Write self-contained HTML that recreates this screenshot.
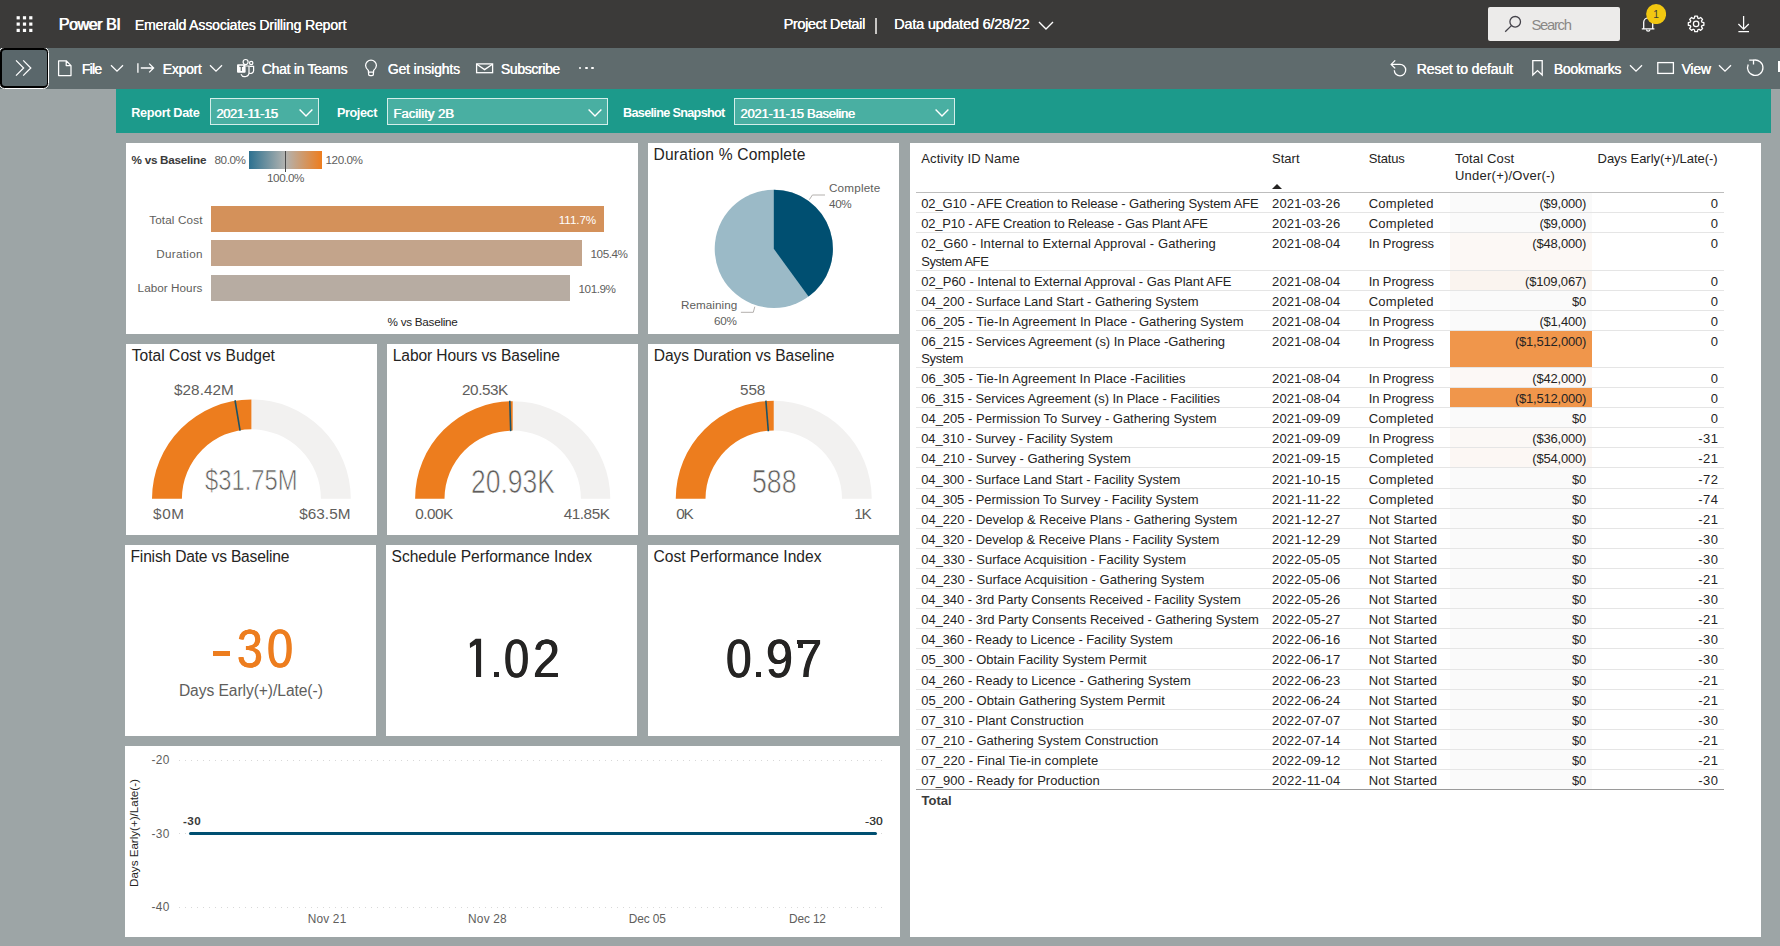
<!DOCTYPE html>
<html><head><meta charset="utf-8"><title>Power BI</title>
<style>
html,body{margin:0;padding:0;}
body{width:1780px;height:946px;background:#9da5a6;position:relative;overflow:hidden;font-family:"Liberation Sans",sans-serif;}
.t{position:absolute;white-space:nowrap;font-family:"Liberation Sans",sans-serif;}
</style></head><body>
<div style="position:absolute;left:0px;top:0px;width:1780px;height:48px;background:#3b3a39;"></div>
<div style="position:absolute;left:0px;top:48px;width:1780px;height:41px;background:#5f6b6d;"></div>
<div style="position:absolute;left:116px;top:89px;width:1655px;height:44px;background:#1c9a8b;"></div>
<svg style="position:absolute;left:0px;top:0px;" width="48" height="48" viewBox="0 0 48 48"><rect x="16.6" y="16.2" width="3.2" height="3.2" fill="#fff"/><rect x="16.6" y="22.5" width="3.2" height="3.2" fill="#fff"/><rect x="16.6" y="28.8" width="3.2" height="3.2" fill="#fff"/><rect x="22.9" y="16.2" width="3.2" height="3.2" fill="#fff"/><rect x="22.9" y="22.5" width="3.2" height="3.2" fill="#fff"/><rect x="22.9" y="28.8" width="3.2" height="3.2" fill="#fff"/><rect x="29.2" y="16.2" width="3.2" height="3.2" fill="#fff"/><rect x="29.2" y="22.5" width="3.2" height="3.2" fill="#fff"/><rect x="29.2" y="28.8" width="3.2" height="3.2" fill="#fff"/></svg>
<div class="t" style="left:58.50px;top:15.26px;font-size:16.00px;line-height:19.20px;letter-spacing:-0.417px;color:#ffffff;text-shadow:0.8px 0 0 #fff;">Power BI</div>
<div class="t" style="left:134.80px;top:16.95px;font-size:14.00px;line-height:16.80px;letter-spacing:-0.122px;color:#ffffff;text-shadow:0.3px 0 0 #fff;">Emerald Associates Drilling Report</div>
<div class="t" style="left:783.40px;top:16.18px;font-size:14.60px;line-height:17.52px;letter-spacing:-0.387px;color:#ffffff;text-shadow:0.3px 0 0 #fff;">Project Detail</div>
<div style="position:absolute;left:875px;top:18px;width:1.5px;height:16px;background:#c8c6c4;"></div>
<div class="t" style="left:894.00px;top:16.18px;font-size:14.60px;line-height:17.52px;letter-spacing:-0.250px;color:#ffffff;text-shadow:0.3px 0 0 #fff;">Data updated 6/28/22</div>
<svg style="position:absolute;left:1037px;top:19px;" width="18" height="12" viewBox="0 0 18 12"><path d="M2 3 L9 10 L16 3" fill="none" stroke="#fff" stroke-width="1.4"/></svg>
<div style="position:absolute;left:1488px;top:7px;width:132px;height:34px;background:#ecebea;border-radius:2px;"></div>
<svg style="position:absolute;left:1503px;top:14px;" width="20" height="20" viewBox="0 0 20 20"><circle cx="12.2" cy="7.8" r="5.3" fill="none" stroke="#44424a" stroke-width="1.3"/><path d="M8.4 11.6 L2.2 17.8" stroke="#44424a" stroke-width="1.3" fill="none"/></svg>
<div class="t" style="left:1531.40px;top:16.59px;font-size:14.80px;line-height:17.76px;letter-spacing:-1.259px;color:#8a8886;">Search</div>
<svg style="position:absolute;left:1636px;top:10px;" width="24" height="24" viewBox="0 0 24 24"><path d="M5.8 18.9 L18.4 18.9 M7.7 18.9 L7.7 12.3 A4.5 4.5 0 0 1 16.7 12.3 L16.7 18.9" fill="none" stroke="#fff" stroke-width="1.3"/><path d="M10.5 19.4 A1.7 1.7 0 0 0 13.9 19.4" fill="none" stroke="#fff" stroke-width="1.2"/></svg>
<svg style="position:absolute;left:1646px;top:4px;" width="20.4" height="20.2" viewBox="0 0 20.4 20.2"><circle cx="10.1" cy="10.1" r="10" fill="#f2c811"/></svg>
<div class="t" style="left:1653.37px;top:8.91px;font-size:10.24px;line-height:12.28px;letter-spacing:0.000px;color:#3b3a39;">1</div>
<svg style="position:absolute;left:1684px;top:12px;" width="24" height="24" viewBox="0 0 24 24"><path d="M19.88 10.54 L19.88 13.26 L17.96 13.60 L17.45 14.84 L18.56 16.44 L16.64 18.36 L15.04 17.25 L13.80 17.76 L13.46 19.68 L10.74 19.68 L10.40 17.76 L9.16 17.25 L7.56 18.36 L5.64 16.44 L6.75 14.84 L6.24 13.60 L4.32 13.26 L4.32 10.54 L6.24 10.20 L6.75 8.96 L5.64 7.36 L7.56 5.44 L9.16 6.55 L10.40 6.04 L10.74 4.12 L13.46 4.12 L13.80 6.04 L15.04 6.55 L16.64 5.44 L18.56 7.36 L17.45 8.96 L17.96 10.20 Z" fill="none" stroke="#fff" stroke-width="1.3" stroke-linejoin="round"/><circle cx="12.1" cy="11.9" r="2.7" fill="none" stroke="#fff" stroke-width="1.25"/></svg>
<svg style="position:absolute;left:1734px;top:12px;" width="20" height="24" viewBox="0 0 20 24"><path d="M9.6 4 L9.6 17 M4.4 12 L9.6 17.2 L14.8 12 M4.4 19.6 L15 19.6" fill="none" stroke="#fff" stroke-width="1.25"/></svg>
<div style="position:absolute;left:0;top:48px;width:50px;height:41px;overflow:hidden;"><div style="position:absolute;left:-1px;top:-1px;width:50px;height:42px;box-sizing:border-box;border:1px solid #fff;border-radius:5.5px;background:#000;"></div></div>
<div style="position:absolute;left:1.9px;top:50px;width:45px;height:36.3px;border-radius:3px;background:#5a676b;"></div>
<svg style="position:absolute;left:12px;top:56px;" width="24" height="24" viewBox="0 0 24 24"><path d="M4 4.4 L11.6 12 L4 19.6 M11.2 4.4 L18.8 12 L11.2 19.6" fill="none" stroke="#fff" stroke-width="1.25"/></svg>
<svg style="position:absolute;left:56px;top:58px;" width="18" height="20" viewBox="0 0 18 20"><path d="M2.6 2.8 L10.2 2.8 L15 7.6 L15 17.6 L2.6 17.6 Z M10.2 2.8 L10.2 7.6 L15 7.6" fill="none" stroke="#fff" stroke-width="1.25" stroke-linejoin="round"/></svg>
<div class="t" style="left:81.70px;top:60.55px;font-size:14.00px;line-height:16.80px;letter-spacing:-0.753px;color:#ffffff;text-shadow:0.3px 0 0 #fff;">File</div>
<svg style="position:absolute;left:109.6px;top:64.4px;" width="14" height="9" viewBox="0 0 14 9"><path d="M1 1.2 L7 7.2 L13 1.2" fill="none" stroke="#fff" stroke-width="1.3"/></svg>
<svg style="position:absolute;left:136px;top:60px;" width="20" height="16" viewBox="0 0 20 16"><path d="M1.9 3.2 L1.9 12.8 M4.8 8 L17.6 8 M13.2 3.6 L17.6 8 L13.2 12.4" fill="none" stroke="#fff" stroke-width="1.3"/></svg>
<div class="t" style="left:162.60px;top:60.55px;font-size:14.00px;line-height:16.80px;letter-spacing:-0.273px;color:#ffffff;text-shadow:0.3px 0 0 #fff;">Export</div>
<svg style="position:absolute;left:208.8px;top:64.4px;" width="14" height="9" viewBox="0 0 14 9"><path d="M1 1.2 L7 7.2 L13 1.2" fill="none" stroke="#fff" stroke-width="1.3"/></svg>
<svg style="position:absolute;left:235px;top:58px;" width="21" height="21" viewBox="0 0 21 21"><rect x="2" y="6.2" width="8.6" height="8.6" rx="1" fill="#fff"/><path d="M4.4 8.4 L8.2 8.4 M6.3 8.4 L6.3 13" stroke="#5f6b6d" stroke-width="1.2"/><circle cx="10.6" cy="4" r="2.5" fill="none" stroke="#fff" stroke-width="1.2"/><circle cx="16.2" cy="5" r="1.7" fill="none" stroke="#fff" stroke-width="1.2"/><path d="M10.6 8 L14 8 L14 14 A4.2 4.2 0 0 1 6 16.2" fill="none" stroke="#fff" stroke-width="1.2"/><path d="M14.4 8.4 L18.6 8.4 L18.6 12.6 A3 3 0 0 1 14 15" fill="none" stroke="#fff" stroke-width="1.2"/></svg>
<div class="t" style="left:261.70px;top:60.55px;font-size:14.00px;line-height:16.80px;letter-spacing:-0.294px;color:#ffffff;text-shadow:0.3px 0 0 #fff;">Chat in Teams</div>
<svg style="position:absolute;left:362px;top:58px;" width="18" height="20" viewBox="0 0 18 20"><path d="M6.4 14.2 L6.4 12.4 C4.6 11 3.6 9.6 3.6 7.6 A5.4 5.4 0 0 1 14.4 7.6 C14.4 9.6 13.4 11 11.6 12.4 L11.6 14.2 Z M6.6 14.4 L6.6 16.2 Q6.6 17.6 8 17.6 L10 17.6 Q11.4 17.6 11.4 16.2 L11.4 14.4" fill="none" stroke="#fff" stroke-width="1.25" stroke-linejoin="round"/></svg>
<div class="t" style="left:387.70px;top:60.55px;font-size:14.00px;line-height:16.80px;letter-spacing:-0.148px;color:#ffffff;text-shadow:0.3px 0 0 #fff;">Get insights</div>
<svg style="position:absolute;left:475px;top:61px;" width="20" height="14" viewBox="0 0 20 14"><rect x="1.6" y="2.9" width="16" height="8.8" fill="none" stroke="#fff" stroke-width="1.3"/><path d="M1.8 3.3 L9.6 8.6 L17.4 3.3" fill="none" stroke="#fff" stroke-width="1.3"/></svg>
<div class="t" style="left:500.80px;top:60.55px;font-size:14.00px;line-height:16.80px;letter-spacing:-0.370px;color:#ffffff;text-shadow:0.3px 0 0 #fff;">Subscribe</div>
<div style="position:absolute;left:578.8px;top:66.8px;width:2.6px;height:2.6px;background:#fff;border-radius:1.2px;"></div>
<div style="position:absolute;left:585.0999999999999px;top:66.8px;width:2.6px;height:2.6px;background:#fff;border-radius:1.2px;"></div>
<div style="position:absolute;left:591.4px;top:66.8px;width:2.6px;height:2.6px;background:#fff;border-radius:1.2px;"></div>
<svg style="position:absolute;left:1388.3px;top:58px;" width="20" height="20" viewBox="0 0 20 20"><path d="M3.6 6.4 L12 6.4 A5.7 5.7 0 1 1 6.3 12.2" fill="none" stroke="#fff" stroke-width="1.3"/><path d="M7.2 2.4 L3.2 6.4 L7.2 10.4" fill="none" stroke="#fff" stroke-width="1.3"/></svg>
<div class="t" style="left:1416.60px;top:60.55px;font-size:14.00px;line-height:16.80px;letter-spacing:-0.124px;color:#ffffff;text-shadow:0.3px 0 0 #fff;">Reset to default</div>
<svg style="position:absolute;left:1530px;top:58px;" width="16" height="20" viewBox="0 0 16 20"><path d="M2.8 2.6 L12.2 2.6 L12.2 17 L7.5 12.6 L2.8 17 Z" fill="none" stroke="#fff" stroke-width="1.3" stroke-linejoin="miter"/></svg>
<div class="t" style="left:1553.80px;top:60.55px;font-size:14.00px;line-height:16.80px;letter-spacing:-0.315px;color:#ffffff;text-shadow:0.3px 0 0 #fff;">Bookmarks</div>
<svg style="position:absolute;left:1629.2px;top:64.4px;" width="14" height="9" viewBox="0 0 14 9"><path d="M1 1.2 L7 7.2 L13 1.2" fill="none" stroke="#fff" stroke-width="1.3"/></svg>
<svg style="position:absolute;left:1655px;top:60px;" width="22" height="16" viewBox="0 0 22 16"><rect x="2.8" y="2.6" width="15.6" height="10.8" fill="none" stroke="#fff" stroke-width="1.3"/></svg>
<div class="t" style="left:1681.50px;top:60.55px;font-size:14.00px;line-height:16.80px;letter-spacing:-0.264px;color:#ffffff;text-shadow:0.3px 0 0 #fff;">View</div>
<svg style="position:absolute;left:1718.2px;top:64.4px;" width="14" height="9" viewBox="0 0 14 9"><path d="M1 1.2 L7 7.2 L13 1.2" fill="none" stroke="#fff" stroke-width="1.3"/></svg>
<svg style="position:absolute;left:1744px;top:56px;" width="24" height="24" viewBox="0 0 24 24"><path d="M9.6 4.2 A7.7 7.7 0 1 1 4.2 8.6" fill="none" stroke="#fff" stroke-width="1.3"/><path d="M5.2 4.2 L9.5 4.2 L9.5 8.6" fill="none" stroke="#fff" stroke-width="1.3"/></svg>
<div style="position:absolute;left:1778.3px;top:61.2px;width:2px;height:10.6px;background:#fff;"></div>
<div class="t" style="left:131.30px;top:106.40px;font-size:12.67px;line-height:15.21px;letter-spacing:-0.324px;color:#ffffff;font-weight:bold;">Report Date</div>
<div style="position:absolute;left:210px;top:98px;width:109px;height:27px;box-sizing:border-box;border:1px solid #d4eeea;background:#49afa2;"></div>
<div class="t" style="left:216.20px;top:105.63px;font-size:13.06px;line-height:15.68px;letter-spacing:-0.463px;color:#ffffff;text-shadow:0.6px 0 0 #fff;">2021-11-15</div>
<svg style="position:absolute;left:297.8px;top:106.6px;" width="16" height="12" viewBox="0 0 16 12"><path d="M1.6 2.6 L8 9 L14.4 2.6" fill="none" stroke="#fff" stroke-width="1.4"/></svg>
<div class="t" style="left:337.00px;top:106.40px;font-size:12.67px;line-height:15.21px;letter-spacing:-0.412px;color:#ffffff;font-weight:bold;">Project</div>
<div style="position:absolute;left:387px;top:98px;width:221px;height:27px;box-sizing:border-box;border:1px solid #d4eeea;background:#49afa2;"></div>
<div class="t" style="left:393.20px;top:105.63px;font-size:13.06px;line-height:15.68px;letter-spacing:0.044px;color:#ffffff;text-shadow:0.6px 0 0 #fff;">Facility 2B</div>
<svg style="position:absolute;left:586.8px;top:106.6px;" width="16" height="12" viewBox="0 0 16 12"><path d="M1.6 2.6 L8 9 L14.4 2.6" fill="none" stroke="#fff" stroke-width="1.4"/></svg>
<div class="t" style="left:623.00px;top:106.40px;font-size:12.67px;line-height:15.21px;letter-spacing:-0.681px;color:#ffffff;font-weight:bold;">Baseline Snapshot</div>
<div style="position:absolute;left:734px;top:98px;width:221px;height:27px;box-sizing:border-box;border:1px solid #d4eeea;background:#49afa2;"></div>
<div class="t" style="left:740.20px;top:105.63px;font-size:13.06px;line-height:15.68px;letter-spacing:-0.256px;color:#ffffff;text-shadow:0.6px 0 0 #fff;">2021-11-15 Baseline</div>
<svg style="position:absolute;left:933.8px;top:106.6px;" width="16" height="12" viewBox="0 0 16 12"><path d="M1.6 2.6 L8 9 L14.4 2.6" fill="none" stroke="#fff" stroke-width="1.4"/></svg>
<div style="position:absolute;left:126px;top:143px;width:512px;height:191px;background:#ffffff;"></div>
<div style="position:absolute;left:648px;top:143px;width:251px;height:191px;background:#ffffff;"></div>
<div style="position:absolute;left:126px;top:344px;width:251px;height:191px;background:#ffffff;"></div>
<div style="position:absolute;left:387px;top:344px;width:251px;height:191px;background:#ffffff;"></div>
<div style="position:absolute;left:648px;top:344px;width:251px;height:191px;background:#ffffff;"></div>
<div style="position:absolute;left:125px;top:545px;width:251px;height:191px;background:#ffffff;"></div>
<div style="position:absolute;left:386px;top:545px;width:251px;height:191px;background:#ffffff;"></div>
<div style="position:absolute;left:648px;top:545px;width:251px;height:191px;background:#ffffff;"></div>
<div style="position:absolute;left:125px;top:746px;width:775px;height:191px;background:#ffffff;"></div>
<div style="position:absolute;left:910px;top:143px;width:851px;height:794px;background:#ffffff;"></div>
<div class="t" style="left:131.50px;top:153.13px;font-size:11.70px;line-height:14.04px;letter-spacing:-0.254px;color:#3a3a3a;font-weight:bold;">% vs Baseline</div>
<div class="t" style="left:214.50px;top:153.13px;font-size:11.70px;line-height:14.04px;letter-spacing:-0.419px;color:#605e5c;">80.0%</div>
<div style="position:absolute;left:249px;top:151px;width:73px;height:18px;background:linear-gradient(90deg,#2d7190 0%,#b3b3b0 50%,#ee7d1e 100%);"></div>
<div style="position:absolute;left:285px;top:151px;width:1px;height:21px;background:#4a4a4a;"></div>
<div class="t" style="left:325.50px;top:153.13px;font-size:11.70px;line-height:14.04px;letter-spacing:-0.436px;color:#605e5c;">120.0%</div>
<div class="t" style="left:267.00px;top:171.13px;font-size:11.70px;line-height:14.04px;letter-spacing:-0.436px;color:#605e5c;">100.0%</div>
<div style="position:absolute;left:211px;top:206px;width:393px;height:26px;background:#d4915a;"></div>
<div class="t" style="left:149.20px;top:212.53px;font-size:11.70px;line-height:14.04px;letter-spacing:0.142px;color:#605e5c;">Total Cost</div>
<div class="t" style="left:558.80px;top:213.13px;font-size:11.70px;line-height:14.04px;letter-spacing:-0.089px;color:#ffffff;">111.7%</div>
<div style="position:absolute;left:211px;top:240px;width:371px;height:26px;background:#c3a48b;"></div>
<div class="t" style="left:156.24px;top:246.53px;font-size:11.70px;line-height:14.04px;letter-spacing:0.291px;color:#605e5c;">Duration</div>
<div class="t" style="left:590.50px;top:247.13px;font-size:11.70px;line-height:14.04px;letter-spacing:-0.436px;color:#605e5c;">105.4%</div>
<div style="position:absolute;left:211px;top:274.5px;width:359px;height:26px;background:#b7aca2;"></div>
<div class="t" style="left:137.60px;top:281.03px;font-size:11.70px;line-height:14.04px;letter-spacing:0.052px;color:#605e5c;">Labor Hours</div>
<div class="t" style="left:578.50px;top:281.63px;font-size:11.70px;line-height:14.04px;letter-spacing:-0.436px;color:#605e5c;">101.9%</div>
<div class="t" style="left:387.50px;top:314.93px;font-size:11.70px;line-height:14.04px;letter-spacing:-0.253px;color:#252423;">% vs Baseline</div>
<svg style="position:absolute;left:648px;top:143px;" width="251" height="191" viewBox="0 0 251 191"><circle cx="125.79999999999995" cy="105.80000000000001" r="59.1" fill="#9bbac7"/><path d="M125.79999999999995 105.80000000000001 L125.79999999999995 46.70000000000001 A59.1 59.1 0 0 1 160.54 153.61 Z" fill="#004f71"/><path d="M161.4 56.6 L164.4 52 L177 52" fill="none" stroke="#b3b0ad" stroke-width="1"/><path d="M92.9 169.3 L105.3 169.3 L106.8 163.7" fill="none" stroke="#b3b0ad" stroke-width="1"/></svg>
<div class="t" style="left:653.50px;top:145.63px;font-size:15.60px;line-height:18.72px;letter-spacing:0.207px;color:#252423;">Duration % Complete</div>
<div class="t" style="left:829.00px;top:181.23px;font-size:11.70px;line-height:14.04px;letter-spacing:0.183px;color:#605e5c;">Complete</div>
<div class="t" style="left:829.00px;top:196.93px;font-size:11.70px;line-height:14.04px;letter-spacing:-0.333px;color:#605e5c;">40%</div>
<div class="t" style="left:681.00px;top:298.33px;font-size:11.70px;line-height:14.04px;letter-spacing:0.047px;color:#605e5c;">Remaining</div>
<div class="t" style="left:714.12px;top:314.13px;font-size:11.70px;line-height:14.04px;letter-spacing:-0.333px;color:#605e5c;">60%</div>
<svg style="position:absolute;left:126px;top:344px;" width="251" height="191" viewBox="0 0 251 191"><path d="M125.40 55.40 A99.4 99.4 0 0 1 224.80 154.80 L194.90 154.80 A69.5 69.5 0 0 0 125.40 85.30 Z" fill="#f2f1f0"/><path d="M26.00 154.80 A99.4 99.4 0 0 1 125.40 55.40 L125.40 85.30 A69.5 69.5 0 0 0 55.90 154.80 Z" fill="#ed7d1e"/><path d="M114.08 86.73 L109.02 56.25" stroke="#1b5368" stroke-width="1.6"/></svg>
<div class="t" style="left:131.80px;top:347.23px;font-size:15.60px;line-height:18.72px;letter-spacing:0.007px;color:#252423;">Total Cost vs Budget</div>
<div class="t" style="left:174.00px;top:381.41px;font-size:15.31px;line-height:18.37px;letter-spacing:0.041px;color:#605e5c;">$28.42M</div>
<div class="t" style="left:153.00px;top:505.11px;font-size:15.31px;line-height:18.37px;letter-spacing:0.623px;color:#605e5c;">$0M</div>
<div class="t" style="left:299.15px;top:505.11px;font-size:15.31px;line-height:18.37px;letter-spacing:0.059px;color:#605e5c;">$63.5M</div>
<div class="t" style="left:205.15px;top:461.65px;font-size:30.16px;line-height:36.19px;letter-spacing:0.000px;color:#605e5c;-webkit-text-stroke:0.7px #fff;transform:scaleX(0.7881);transform-origin:0 0;">$31.75M</div>
<svg style="position:absolute;left:387px;top:344px;" width="251" height="191" viewBox="0 0 251 191"><path d="M125.70 57.20 A97.6 97.6 0 0 1 223.30 154.80 L193.90 154.80 A68.2 68.2 0 0 0 125.70 86.60 Z" fill="#f2f1f0"/><path d="M28.10 154.80 A97.6 97.6 0 0 1 125.70 57.20 L125.70 86.60 A68.2 68.2 0 0 0 57.50 154.80 Z" fill="#ed7d1e"/><path d="M123.69 87.13 L122.79 56.74" stroke="#1b5368" stroke-width="1.6"/></svg>
<div class="t" style="left:392.80px;top:347.23px;font-size:15.60px;line-height:18.72px;letter-spacing:-0.125px;color:#252423;">Labor Hours vs Baseline</div>
<div class="t" style="left:462.00px;top:381.41px;font-size:15.31px;line-height:18.37px;letter-spacing:-0.431px;color:#605e5c;">20.53K</div>
<div class="t" style="left:415.30px;top:505.11px;font-size:15.31px;line-height:18.37px;letter-spacing:-0.526px;color:#605e5c;">0.00K</div>
<div class="t" style="left:563.64px;top:505.11px;font-size:15.31px;line-height:18.37px;letter-spacing:-0.431px;color:#605e5c;">41.85K</div>
<div class="t" style="left:470.70px;top:461.59px;font-size:32.66px;line-height:39.19px;letter-spacing:0.000px;color:#605e5c;-webkit-text-stroke:0.7px #fff;transform:scaleX(0.8116);transform-origin:0 0;">20.93K</div>
<svg style="position:absolute;left:648px;top:344px;" width="251" height="191" viewBox="0 0 251 191"><path d="M125.75 56.80 A98 98 0 0 1 223.75 154.80 L194.00 154.80 A68.25 68.25 0 0 0 125.75 86.55 Z" fill="#f2f1f0"/><path d="M27.75 154.80 A98 98 0 0 1 125.75 56.80 L125.75 86.55 A68.25 68.25 0 0 0 57.50 154.80 Z" fill="#ed7d1e"/><path d="M120.33 87.27 L117.86 56.62" stroke="#1b5368" stroke-width="1.6"/></svg>
<div class="t" style="left:653.80px;top:347.23px;font-size:15.60px;line-height:18.72px;letter-spacing:-0.094px;color:#252423;">Days Duration vs Baseline</div>
<div class="t" style="left:740.00px;top:381.41px;font-size:15.31px;line-height:18.37px;letter-spacing:-0.075px;color:#605e5c;">558</div>
<div class="t" style="left:676.20px;top:505.11px;font-size:15.31px;line-height:18.37px;letter-spacing:-1.154px;color:#605e5c;">0K</div>
<div class="t" style="left:854.23px;top:505.11px;font-size:15.31px;line-height:18.37px;letter-spacing:-1.154px;color:#605e5c;">1K</div>
<div class="t" style="left:751.50px;top:461.59px;font-size:32.66px;line-height:39.19px;letter-spacing:0.000px;color:#605e5c;-webkit-text-stroke:0.7px #fff;transform:scaleX(0.8167);transform-origin:0 0;">588</div>
<div class="t" style="left:130.50px;top:548.23px;font-size:15.60px;line-height:18.72px;letter-spacing:-0.182px;color:#252423;">Finish Date vs Baseline</div>
<div class="t" style="left:391.50px;top:548.23px;font-size:15.60px;line-height:18.72px;letter-spacing:-0.020px;color:#252423;">Schedule Performance Index</div>
<div class="t" style="left:653.50px;top:548.23px;font-size:15.60px;line-height:18.72px;letter-spacing:-0.010px;color:#252423;">Cost Performance Index</div>
<div style="position:absolute;left:212.7px;top:650.7px;width:16.9px;height:5.3px;background:#ed7d1e;"></div>
<div class="t" style="left:237.06px;top:615.81px;font-size:54.40px;line-height:65.28px;color:#ed7d1e;transform:scaleX(0.8514);transform-origin:0 0;text-shadow:0.6px 0 0 #ed7d1e,-0.6px 0 0 #ed7d1e;">3</div>
<div class="t" style="left:266.82px;top:615.81px;font-size:54.40px;line-height:65.28px;color:#ed7d1e;transform:scaleX(0.8623);transform-origin:0 0;text-shadow:0.6px 0 0 #ed7d1e,-0.6px 0 0 #ed7d1e;">0</div>
<div class="t" style="left:178.91px;top:682.43px;font-size:15.60px;line-height:18.72px;letter-spacing:-0.061px;color:#605e5c;">Days Early(+)/Late(-)</div>
<svg style="position:absolute;left:465px;top:635px;" width="20" height="45" viewBox="0 0 20 45"><path d="M4.8 8.3 L10.7 3.7 L16.1 3.7 L16.1 41.9 L11 41.9 L11 9.4 L5 12.9 Z" fill="#252423"/></svg>
<div style="position:absolute;left:494.2px;top:672.1px;width:5.1px;height:4.9px;background:#252423;"></div>
<div class="t" style="left:504.09px;top:625.61px;font-size:54.40px;line-height:65.28px;color:#252423;transform:scaleX(0.8315);transform-origin:0 0;text-shadow:0.6px 0 0 #252423,-0.6px 0 0 #252423;">0</div>
<div class="t" style="left:532.68px;top:625.61px;font-size:54.40px;line-height:65.28px;color:#252423;transform:scaleX(0.8888);transform-origin:0 0;text-shadow:0.6px 0 0 #252423,-0.6px 0 0 #252423;">2</div>
<div class="t" style="left:726.26px;top:625.61px;font-size:54.40px;line-height:65.28px;color:#252423;transform:scaleX(0.8469);transform-origin:0 0;text-shadow:0.6px 0 0 #252423,-0.6px 0 0 #252423;">0</div>
<div style="position:absolute;left:756.2px;top:672.1px;width:5.1px;height:4.9px;background:#252423;"></div>
<div class="t" style="left:765.60px;top:625.61px;font-size:54.40px;line-height:65.28px;color:#252423;transform:scaleX(0.8903);transform-origin:0 0;text-shadow:0.6px 0 0 #252423,-0.6px 0 0 #252423;">9</div>
<div class="t" style="left:795.25px;top:625.61px;font-size:54.40px;line-height:65.28px;color:#252423;transform:scaleX(0.8937);transform-origin:0 0;text-shadow:0.6px 0 0 #252423,-0.6px 0 0 #252423;">7</div>
<div style="position:absolute;left:797.8px;top:640.5px;width:5.0px;height:7.2px;background:#252423;"></div>
<div style="position:absolute;left:179px;top:760px;width:708px;height:1px;background:repeating-linear-gradient(90deg,#d8d8d8 0,#d8d8d8 1px,transparent 1px,transparent 6px);"></div>
<div style="position:absolute;left:179px;top:833px;width:708px;height:1px;background:repeating-linear-gradient(90deg,#d8d8d8 0,#d8d8d8 1px,transparent 1px,transparent 6px);"></div>
<div style="position:absolute;left:179px;top:907px;width:708px;height:1px;background:repeating-linear-gradient(90deg,#d8d8d8 0,#d8d8d8 1px,transparent 1px,transparent 6px);"></div>
<div style="position:absolute;left:188.5px;top:831.7px;width:688.5px;height:3.2px;background:#004f71;border-radius:1.6px;"></div>
<div class="t" style="left:151.47px;top:752.54px;font-size:11.89px;line-height:14.27px;letter-spacing:0.420px;color:#605e5c;">-20</div>
<div class="t" style="left:151.47px;top:826.64px;font-size:11.89px;line-height:14.27px;letter-spacing:0.420px;color:#605e5c;">-30</div>
<div class="t" style="left:151.47px;top:900.14px;font-size:11.89px;line-height:14.27px;letter-spacing:0.420px;color:#605e5c;">-40</div>
<div class="t" style="left:183.00px;top:814.13px;font-size:11.70px;line-height:14.04px;letter-spacing:0.444px;color:#3a3a3a;font-weight:bold;">-30</div>
<div class="t" style="left:864.90px;top:814.13px;font-size:11.70px;line-height:14.04px;letter-spacing:0.344px;color:#3a3a3a;text-shadow:0.4px 0 0 #3a3a3a;">-30</div>
<div class="t" style="left:307.69px;top:911.94px;font-size:11.89px;line-height:14.27px;letter-spacing:0.185px;color:#605e5c;">Nov 21</div>
<div class="t" style="left:468.09px;top:911.94px;font-size:11.89px;line-height:14.27px;letter-spacing:0.185px;color:#605e5c;">Nov 28</div>
<div class="t" style="left:628.77px;top:911.94px;font-size:11.89px;line-height:14.27px;letter-spacing:-0.125px;color:#605e5c;">Dec 05</div>
<div class="t" style="left:788.97px;top:911.94px;font-size:11.89px;line-height:14.27px;letter-spacing:-0.125px;color:#605e5c;">Dec 12</div>
<div style="position:absolute;left:135px;top:833.3px;width:0;height:0;"><div style="transform:rotate(-90deg);transform-origin:0 0;position:absolute;left:0;top:0;"><div class="t" style="left:-53.99px;top:-8.5px;font-size:11.7px;line-height:14px;letter-spacing:-0.046px;color:#252423;">Days Early(+)/Late(-)</div></div></div>
<div class="t" style="left:921.20px;top:151.10px;font-size:13.00px;line-height:15.60px;letter-spacing:0.159px;color:#252423;">Activity ID Name</div>
<div class="t" style="left:1272.00px;top:151.10px;font-size:13.00px;line-height:15.60px;letter-spacing:0.021px;color:#252423;">Start</div>
<div class="t" style="left:1368.70px;top:151.10px;font-size:13.00px;line-height:15.60px;letter-spacing:-0.154px;color:#252423;">Status</div>
<div class="t" style="left:1455.00px;top:151.10px;font-size:13.00px;line-height:15.60px;letter-spacing:0.158px;color:#252423;">Total Cost</div>
<div class="t" style="left:1455.00px;top:168.10px;font-size:13.00px;line-height:15.60px;letter-spacing:0.233px;color:#252423;">Under(+)/Over(-)</div>
<div class="t" style="left:1597.60px;top:151.10px;font-size:13.00px;line-height:15.60px;letter-spacing:-0.051px;color:#252423;">Days Early(+)/Late(-)</div>
<svg style="position:absolute;left:1271px;top:183px;" width="12" height="7" viewBox="0 0 12 7"><path d="M1 6 L6 1 L11 6 Z" fill="#252423"/></svg>
<div style="position:absolute;left:916px;top:192px;width:808px;height:1px;background:#bdbdbd;"></div>
<div style="position:absolute;left:1449.5px;top:193px;width:142.5px;height:19px;background:#fafafa;"></div>
<div class="t" style="left:921.20px;top:195.70px;font-size:13.00px;line-height:15.60px;letter-spacing:-0.131px;color:#252423;">02_G10 - AFE Creation to Release - Gathering System AFE</div>
<div class="t" style="left:1272.00px;top:195.70px;font-size:13.00px;line-height:15.60px;letter-spacing:0.185px;color:#252423;">2021-03-26</div>
<div class="t" style="left:1368.70px;top:195.70px;font-size:13.00px;line-height:15.60px;letter-spacing:0.254px;color:#252423;">Completed</div>
<div class="t" style="left:1539.44px;top:195.70px;font-size:13.00px;line-height:15.60px;letter-spacing:-0.221px;color:#252423;">($9,000)</div>
<div class="t" style="left:1710.81px;top:195.70px;font-size:13.00px;line-height:15.60px;letter-spacing:0.000px;color:#252423;">0</div>
<div style="position:absolute;left:916px;top:212px;width:808px;height:1px;background:#e5e5e5;"></div>
<div style="position:absolute;left:1449.5px;top:213px;width:142.5px;height:19px;background:#fafafa;"></div>
<div class="t" style="left:921.20px;top:215.70px;font-size:13.00px;line-height:15.60px;letter-spacing:-0.203px;color:#252423;">02_P10 - AFE Creation to Release - Gas Plant AFE</div>
<div class="t" style="left:1272.00px;top:215.70px;font-size:13.00px;line-height:15.60px;letter-spacing:0.185px;color:#252423;">2021-03-26</div>
<div class="t" style="left:1368.70px;top:215.70px;font-size:13.00px;line-height:15.60px;letter-spacing:0.254px;color:#252423;">Completed</div>
<div class="t" style="left:1539.44px;top:215.70px;font-size:13.00px;line-height:15.60px;letter-spacing:-0.221px;color:#252423;">($9,000)</div>
<div class="t" style="left:1710.81px;top:215.70px;font-size:13.00px;line-height:15.60px;letter-spacing:0.000px;color:#252423;">0</div>
<div style="position:absolute;left:916px;top:232px;width:808px;height:1px;background:#e5e5e5;"></div>
<div style="position:absolute;left:1449.5px;top:233px;width:142.5px;height:37px;background:#fcf8f5;"></div>
<div class="t" style="left:921.20px;top:235.50px;font-size:13.00px;line-height:15.60px;letter-spacing:0.099px;color:#252423;">02_G60 - Internal to External Approval - Gathering</div>
<div class="t" style="left:921.20px;top:253.70px;font-size:13.00px;line-height:15.60px;letter-spacing:-0.434px;color:#252423;">System AFE</div>
<div class="t" style="left:1272.00px;top:235.50px;font-size:13.00px;line-height:15.60px;letter-spacing:0.185px;color:#252423;">2021-08-04</div>
<div class="t" style="left:1368.70px;top:235.50px;font-size:13.00px;line-height:15.60px;letter-spacing:-0.105px;color:#252423;">In Progress</div>
<div class="t" style="left:1532.25px;top:235.50px;font-size:13.00px;line-height:15.60px;letter-spacing:-0.199px;color:#252423;">($48,000)</div>
<div class="t" style="left:1710.81px;top:235.50px;font-size:13.00px;line-height:15.60px;letter-spacing:0.000px;color:#252423;">0</div>
<div style="position:absolute;left:916px;top:270px;width:808px;height:1px;background:#e5e5e5;"></div>
<div style="position:absolute;left:1449.5px;top:271px;width:142.5px;height:19px;background:#faf4ef;"></div>
<div class="t" style="left:921.20px;top:273.70px;font-size:13.00px;line-height:15.60px;letter-spacing:-0.035px;color:#252423;">02_P60 - Intenal to External Approval - Gas Plant AFE</div>
<div class="t" style="left:1272.00px;top:273.70px;font-size:13.00px;line-height:15.60px;letter-spacing:0.185px;color:#252423;">2021-08-04</div>
<div class="t" style="left:1368.70px;top:273.70px;font-size:13.00px;line-height:15.60px;letter-spacing:-0.105px;color:#252423;">In Progress</div>
<div class="t" style="left:1525.07px;top:273.70px;font-size:13.00px;line-height:15.60px;letter-spacing:-0.181px;color:#252423;">($109,067)</div>
<div class="t" style="left:1710.81px;top:273.70px;font-size:13.00px;line-height:15.60px;letter-spacing:0.000px;color:#252423;">0</div>
<div style="position:absolute;left:916px;top:290px;width:808px;height:1px;background:#e5e5e5;"></div>
<div style="position:absolute;left:1449.5px;top:291px;width:142.5px;height:19px;background:#fafafa;"></div>
<div class="t" style="left:921.20px;top:293.70px;font-size:13.00px;line-height:15.60px;letter-spacing:-0.036px;color:#252423;">04_200 - Surface Land Start - Gathering System</div>
<div class="t" style="left:1272.00px;top:293.70px;font-size:13.00px;line-height:15.60px;letter-spacing:0.185px;color:#252423;">2021-08-04</div>
<div class="t" style="left:1368.70px;top:293.70px;font-size:13.00px;line-height:15.60px;letter-spacing:0.254px;color:#252423;">Completed</div>
<div class="t" style="left:1571.93px;top:293.70px;font-size:13.00px;line-height:15.60px;letter-spacing:-0.085px;color:#252423;">$0</div>
<div class="t" style="left:1710.81px;top:293.70px;font-size:13.00px;line-height:15.60px;letter-spacing:0.000px;color:#252423;">0</div>
<div style="position:absolute;left:916px;top:310px;width:808px;height:1px;background:#e5e5e5;"></div>
<div style="position:absolute;left:1449.5px;top:311px;width:142.5px;height:19px;background:#fafafa;"></div>
<div class="t" style="left:921.20px;top:313.70px;font-size:13.00px;line-height:15.60px;letter-spacing:0.045px;color:#252423;">06_205 - Tie-In Agreement In Place - Gathering System</div>
<div class="t" style="left:1272.00px;top:313.70px;font-size:13.00px;line-height:15.60px;letter-spacing:0.185px;color:#252423;">2021-08-04</div>
<div class="t" style="left:1368.70px;top:313.70px;font-size:13.00px;line-height:15.60px;letter-spacing:-0.105px;color:#252423;">In Progress</div>
<div class="t" style="left:1539.44px;top:313.70px;font-size:13.00px;line-height:15.60px;letter-spacing:-0.221px;color:#252423;">($1,400)</div>
<div class="t" style="left:1710.81px;top:313.70px;font-size:13.00px;line-height:15.60px;letter-spacing:0.000px;color:#252423;">0</div>
<div style="position:absolute;left:916px;top:330px;width:808px;height:1px;background:#e5e5e5;"></div>
<div style="position:absolute;left:1449.5px;top:331px;width:142.5px;height:36px;background:#f0964b;"></div>
<div class="t" style="left:921.20px;top:333.50px;font-size:13.00px;line-height:15.60px;letter-spacing:-0.035px;color:#252423;">06_215 - Services Agreement (s) In Place -Gathering</div>
<div class="t" style="left:921.20px;top:350.70px;font-size:13.00px;line-height:15.60px;letter-spacing:-0.245px;color:#252423;">System</div>
<div class="t" style="left:1272.00px;top:333.50px;font-size:13.00px;line-height:15.60px;letter-spacing:0.185px;color:#252423;">2021-08-04</div>
<div class="t" style="left:1368.70px;top:333.50px;font-size:13.00px;line-height:15.60px;letter-spacing:-0.105px;color:#252423;">In Progress</div>
<div class="t" style="left:1514.99px;top:333.50px;font-size:13.00px;line-height:15.60px;letter-spacing:-0.218px;color:#252423;">($1,512,000)</div>
<div class="t" style="left:1710.81px;top:333.50px;font-size:13.00px;line-height:15.60px;letter-spacing:0.000px;color:#252423;">0</div>
<div style="position:absolute;left:916px;top:367px;width:808px;height:1px;background:#e5e5e5;"></div>
<div style="position:absolute;left:1449.5px;top:368px;width:142.5px;height:19px;background:#fcf8f6;"></div>
<div class="t" style="left:921.20px;top:370.70px;font-size:13.00px;line-height:15.60px;letter-spacing:0.030px;color:#252423;">06_305 - Tie-In Agreement In Place -Facilities</div>
<div class="t" style="left:1272.00px;top:370.70px;font-size:13.00px;line-height:15.60px;letter-spacing:0.185px;color:#252423;">2021-08-04</div>
<div class="t" style="left:1368.70px;top:370.70px;font-size:13.00px;line-height:15.60px;letter-spacing:-0.105px;color:#252423;">In Progress</div>
<div class="t" style="left:1532.25px;top:370.70px;font-size:13.00px;line-height:15.60px;letter-spacing:-0.199px;color:#252423;">($42,000)</div>
<div class="t" style="left:1710.81px;top:370.70px;font-size:13.00px;line-height:15.60px;letter-spacing:0.000px;color:#252423;">0</div>
<div style="position:absolute;left:916px;top:387px;width:808px;height:1px;background:#e5e5e5;"></div>
<div style="position:absolute;left:1449.5px;top:388px;width:142.5px;height:19px;background:#f0964b;"></div>
<div class="t" style="left:921.20px;top:390.70px;font-size:13.00px;line-height:15.60px;letter-spacing:-0.074px;color:#252423;">06_315 - Services Agreement (s) In Place - Facilities</div>
<div class="t" style="left:1272.00px;top:390.70px;font-size:13.00px;line-height:15.60px;letter-spacing:0.185px;color:#252423;">2021-08-04</div>
<div class="t" style="left:1368.70px;top:390.70px;font-size:13.00px;line-height:15.60px;letter-spacing:-0.105px;color:#252423;">In Progress</div>
<div class="t" style="left:1514.99px;top:390.70px;font-size:13.00px;line-height:15.60px;letter-spacing:-0.218px;color:#252423;">($1,512,000)</div>
<div class="t" style="left:1710.81px;top:390.70px;font-size:13.00px;line-height:15.60px;letter-spacing:0.000px;color:#252423;">0</div>
<div style="position:absolute;left:916px;top:407px;width:808px;height:1px;background:#e5e5e5;"></div>
<div style="position:absolute;left:1449.5px;top:408px;width:142.5px;height:19px;background:#fafafa;"></div>
<div class="t" style="left:921.20px;top:410.70px;font-size:13.00px;line-height:15.60px;letter-spacing:-0.011px;color:#252423;">04_205 - Permission To Survey - Gathering System</div>
<div class="t" style="left:1272.00px;top:410.70px;font-size:13.00px;line-height:15.60px;letter-spacing:0.185px;color:#252423;">2021-09-09</div>
<div class="t" style="left:1368.70px;top:410.70px;font-size:13.00px;line-height:15.60px;letter-spacing:0.254px;color:#252423;">Completed</div>
<div class="t" style="left:1571.93px;top:410.70px;font-size:13.00px;line-height:15.60px;letter-spacing:-0.085px;color:#252423;">$0</div>
<div class="t" style="left:1710.81px;top:410.70px;font-size:13.00px;line-height:15.60px;letter-spacing:0.000px;color:#252423;">0</div>
<div style="position:absolute;left:916px;top:427px;width:808px;height:1px;background:#e5e5e5;"></div>
<div style="position:absolute;left:1449.5px;top:428px;width:142.5px;height:19px;background:#fbf8f6;"></div>
<div class="t" style="left:921.20px;top:430.70px;font-size:13.00px;line-height:15.60px;letter-spacing:-0.085px;color:#252423;">04_310 - Survey - Facility System</div>
<div class="t" style="left:1272.00px;top:430.70px;font-size:13.00px;line-height:15.60px;letter-spacing:0.185px;color:#252423;">2021-09-09</div>
<div class="t" style="left:1368.70px;top:430.70px;font-size:13.00px;line-height:15.60px;letter-spacing:-0.105px;color:#252423;">In Progress</div>
<div class="t" style="left:1532.25px;top:430.70px;font-size:13.00px;line-height:15.60px;letter-spacing:-0.199px;color:#252423;">($36,000)</div>
<div class="t" style="left:1698.30px;top:430.70px;font-size:13.00px;line-height:15.60px;letter-spacing:0.458px;color:#252423;">-31</div>
<div style="position:absolute;left:916px;top:447px;width:808px;height:1px;background:#e5e5e5;"></div>
<div style="position:absolute;left:1449.5px;top:448px;width:142.5px;height:19px;background:#fcf7f4;"></div>
<div class="t" style="left:921.20px;top:450.70px;font-size:13.00px;line-height:15.60px;letter-spacing:-0.038px;color:#252423;">04_210 - Survey - Gathering System</div>
<div class="t" style="left:1272.00px;top:450.70px;font-size:13.00px;line-height:15.60px;letter-spacing:0.185px;color:#252423;">2021-09-15</div>
<div class="t" style="left:1368.70px;top:450.70px;font-size:13.00px;line-height:15.60px;letter-spacing:0.254px;color:#252423;">Completed</div>
<div class="t" style="left:1532.25px;top:450.70px;font-size:13.00px;line-height:15.60px;letter-spacing:-0.199px;color:#252423;">($54,000)</div>
<div class="t" style="left:1698.30px;top:450.70px;font-size:13.00px;line-height:15.60px;letter-spacing:0.458px;color:#252423;">-21</div>
<div style="position:absolute;left:916px;top:467px;width:808px;height:1px;background:#e5e5e5;"></div>
<div style="position:absolute;left:1449.5px;top:468px;width:142.5px;height:20px;background:#fafafa;"></div>
<div class="t" style="left:921.20px;top:471.70px;font-size:13.00px;line-height:15.60px;letter-spacing:-0.070px;color:#252423;">04_300 - Surface Land Start - Facility System</div>
<div class="t" style="left:1272.00px;top:471.70px;font-size:13.00px;line-height:15.60px;letter-spacing:0.185px;color:#252423;">2021-10-15</div>
<div class="t" style="left:1368.70px;top:471.70px;font-size:13.00px;line-height:15.60px;letter-spacing:0.254px;color:#252423;">Completed</div>
<div class="t" style="left:1571.93px;top:471.70px;font-size:13.00px;line-height:15.60px;letter-spacing:-0.085px;color:#252423;">$0</div>
<div class="t" style="left:1698.30px;top:471.70px;font-size:13.00px;line-height:15.60px;letter-spacing:0.458px;color:#252423;">-72</div>
<div style="position:absolute;left:916px;top:488px;width:808px;height:1px;background:#e5e5e5;"></div>
<div style="position:absolute;left:1449.5px;top:489px;width:142.5px;height:19px;background:#fafafa;"></div>
<div class="t" style="left:921.20px;top:491.70px;font-size:13.00px;line-height:15.60px;letter-spacing:-0.043px;color:#252423;">04_305 - Permission To Survey - Facility System</div>
<div class="t" style="left:1272.00px;top:491.70px;font-size:13.00px;line-height:15.60px;letter-spacing:0.292px;color:#252423;">2021-11-22</div>
<div class="t" style="left:1368.70px;top:491.70px;font-size:13.00px;line-height:15.60px;letter-spacing:0.254px;color:#252423;">Completed</div>
<div class="t" style="left:1571.93px;top:491.70px;font-size:13.00px;line-height:15.60px;letter-spacing:-0.085px;color:#252423;">$0</div>
<div class="t" style="left:1698.30px;top:491.70px;font-size:13.00px;line-height:15.60px;letter-spacing:0.458px;color:#252423;">-74</div>
<div style="position:absolute;left:916px;top:508px;width:808px;height:1px;background:#e5e5e5;"></div>
<div style="position:absolute;left:1449.5px;top:509px;width:142.5px;height:19px;background:#fafafa;"></div>
<div class="t" style="left:921.20px;top:511.70px;font-size:13.00px;line-height:15.60px;letter-spacing:-0.020px;color:#252423;">04_220 - Develop &amp; Receive Plans - Gathering System</div>
<div class="t" style="left:1272.00px;top:511.70px;font-size:13.00px;line-height:15.60px;letter-spacing:0.185px;color:#252423;">2021-12-27</div>
<div class="t" style="left:1368.70px;top:511.70px;font-size:13.00px;line-height:15.60px;letter-spacing:0.255px;color:#252423;">Not Started</div>
<div class="t" style="left:1571.93px;top:511.70px;font-size:13.00px;line-height:15.60px;letter-spacing:-0.085px;color:#252423;">$0</div>
<div class="t" style="left:1698.30px;top:511.70px;font-size:13.00px;line-height:15.60px;letter-spacing:0.458px;color:#252423;">-21</div>
<div style="position:absolute;left:916px;top:528px;width:808px;height:1px;background:#e5e5e5;"></div>
<div style="position:absolute;left:1449.5px;top:529px;width:142.5px;height:19px;background:#fafafa;"></div>
<div class="t" style="left:921.20px;top:531.70px;font-size:13.00px;line-height:15.60px;letter-spacing:-0.050px;color:#252423;">04_320 - Develop &amp; Receive Plans - Facility System</div>
<div class="t" style="left:1272.00px;top:531.70px;font-size:13.00px;line-height:15.60px;letter-spacing:0.185px;color:#252423;">2021-12-29</div>
<div class="t" style="left:1368.70px;top:531.70px;font-size:13.00px;line-height:15.60px;letter-spacing:0.255px;color:#252423;">Not Started</div>
<div class="t" style="left:1571.93px;top:531.70px;font-size:13.00px;line-height:15.60px;letter-spacing:-0.085px;color:#252423;">$0</div>
<div class="t" style="left:1698.30px;top:531.70px;font-size:13.00px;line-height:15.60px;letter-spacing:0.458px;color:#252423;">-30</div>
<div style="position:absolute;left:916px;top:548px;width:808px;height:1px;background:#e5e5e5;"></div>
<div style="position:absolute;left:1449.5px;top:549px;width:142.5px;height:19px;background:#fafafa;"></div>
<div class="t" style="left:921.20px;top:551.70px;font-size:13.00px;line-height:15.60px;letter-spacing:0.010px;color:#252423;">04_330 - Surface Acquisition - Facility System</div>
<div class="t" style="left:1272.00px;top:551.70px;font-size:13.00px;line-height:15.60px;letter-spacing:0.185px;color:#252423;">2022-05-05</div>
<div class="t" style="left:1368.70px;top:551.70px;font-size:13.00px;line-height:15.60px;letter-spacing:0.255px;color:#252423;">Not Started</div>
<div class="t" style="left:1571.93px;top:551.70px;font-size:13.00px;line-height:15.60px;letter-spacing:-0.085px;color:#252423;">$0</div>
<div class="t" style="left:1698.30px;top:551.70px;font-size:13.00px;line-height:15.60px;letter-spacing:0.458px;color:#252423;">-30</div>
<div style="position:absolute;left:916px;top:568px;width:808px;height:1px;background:#e5e5e5;"></div>
<div style="position:absolute;left:1449.5px;top:569px;width:142.5px;height:19px;background:#fafafa;"></div>
<div class="t" style="left:921.20px;top:571.70px;font-size:13.00px;line-height:15.60px;letter-spacing:0.042px;color:#252423;">04_230 - Surface Acquisition - Gathering System</div>
<div class="t" style="left:1272.00px;top:571.70px;font-size:13.00px;line-height:15.60px;letter-spacing:0.185px;color:#252423;">2022-05-06</div>
<div class="t" style="left:1368.70px;top:571.70px;font-size:13.00px;line-height:15.60px;letter-spacing:0.255px;color:#252423;">Not Started</div>
<div class="t" style="left:1571.93px;top:571.70px;font-size:13.00px;line-height:15.60px;letter-spacing:-0.085px;color:#252423;">$0</div>
<div class="t" style="left:1698.30px;top:571.70px;font-size:13.00px;line-height:15.60px;letter-spacing:0.458px;color:#252423;">-21</div>
<div style="position:absolute;left:916px;top:588px;width:808px;height:1px;background:#e5e5e5;"></div>
<div style="position:absolute;left:1449.5px;top:589px;width:142.5px;height:19px;background:#fafafa;"></div>
<div class="t" style="left:921.20px;top:591.70px;font-size:13.00px;line-height:15.60px;letter-spacing:-0.065px;color:#252423;">04_340 - 3rd Party Consents Received - Facility System</div>
<div class="t" style="left:1272.00px;top:591.70px;font-size:13.00px;line-height:15.60px;letter-spacing:0.185px;color:#252423;">2022-05-26</div>
<div class="t" style="left:1368.70px;top:591.70px;font-size:13.00px;line-height:15.60px;letter-spacing:0.255px;color:#252423;">Not Started</div>
<div class="t" style="left:1571.93px;top:591.70px;font-size:13.00px;line-height:15.60px;letter-spacing:-0.085px;color:#252423;">$0</div>
<div class="t" style="left:1698.30px;top:591.70px;font-size:13.00px;line-height:15.60px;letter-spacing:0.458px;color:#252423;">-30</div>
<div style="position:absolute;left:916px;top:608px;width:808px;height:1px;background:#e5e5e5;"></div>
<div style="position:absolute;left:1449.5px;top:609px;width:142.5px;height:19px;background:#fafafa;"></div>
<div class="t" style="left:921.20px;top:611.70px;font-size:13.00px;line-height:15.60px;letter-spacing:-0.037px;color:#252423;">04_240 - 3rd Party Consents Received - Gathering System</div>
<div class="t" style="left:1272.00px;top:611.70px;font-size:13.00px;line-height:15.60px;letter-spacing:0.185px;color:#252423;">2022-05-27</div>
<div class="t" style="left:1368.70px;top:611.70px;font-size:13.00px;line-height:15.60px;letter-spacing:0.255px;color:#252423;">Not Started</div>
<div class="t" style="left:1571.93px;top:611.70px;font-size:13.00px;line-height:15.60px;letter-spacing:-0.085px;color:#252423;">$0</div>
<div class="t" style="left:1698.30px;top:611.70px;font-size:13.00px;line-height:15.60px;letter-spacing:0.458px;color:#252423;">-21</div>
<div style="position:absolute;left:916px;top:628px;width:808px;height:1px;background:#e5e5e5;"></div>
<div style="position:absolute;left:1449.5px;top:629px;width:142.5px;height:19px;background:#fafafa;"></div>
<div class="t" style="left:921.20px;top:631.70px;font-size:13.00px;line-height:15.60px;letter-spacing:-0.067px;color:#252423;">04_360 - Ready to Licence - Facility System</div>
<div class="t" style="left:1272.00px;top:631.70px;font-size:13.00px;line-height:15.60px;letter-spacing:0.185px;color:#252423;">2022-06-16</div>
<div class="t" style="left:1368.70px;top:631.70px;font-size:13.00px;line-height:15.60px;letter-spacing:0.255px;color:#252423;">Not Started</div>
<div class="t" style="left:1571.93px;top:631.70px;font-size:13.00px;line-height:15.60px;letter-spacing:-0.085px;color:#252423;">$0</div>
<div class="t" style="left:1698.30px;top:631.70px;font-size:13.00px;line-height:15.60px;letter-spacing:0.458px;color:#252423;">-30</div>
<div style="position:absolute;left:916px;top:648px;width:808px;height:1px;background:#e5e5e5;"></div>
<div style="position:absolute;left:1449.5px;top:649px;width:142.5px;height:20px;background:#fafafa;"></div>
<div class="t" style="left:921.20px;top:651.70px;font-size:13.00px;line-height:15.60px;letter-spacing:0.002px;color:#252423;">05_300 - Obtain Facility System Permit</div>
<div class="t" style="left:1272.00px;top:651.70px;font-size:13.00px;line-height:15.60px;letter-spacing:0.185px;color:#252423;">2022-06-17</div>
<div class="t" style="left:1368.70px;top:651.70px;font-size:13.00px;line-height:15.60px;letter-spacing:0.255px;color:#252423;">Not Started</div>
<div class="t" style="left:1571.93px;top:651.70px;font-size:13.00px;line-height:15.60px;letter-spacing:-0.085px;color:#252423;">$0</div>
<div class="t" style="left:1698.30px;top:651.70px;font-size:13.00px;line-height:15.60px;letter-spacing:0.458px;color:#252423;">-30</div>
<div style="position:absolute;left:916px;top:669px;width:808px;height:1px;background:#e5e5e5;"></div>
<div style="position:absolute;left:1449.5px;top:670px;width:142.5px;height:19px;background:#fafafa;"></div>
<div class="t" style="left:921.20px;top:672.70px;font-size:13.00px;line-height:15.60px;letter-spacing:-0.031px;color:#252423;">04_260 - Ready to Licence - Gathering System</div>
<div class="t" style="left:1272.00px;top:672.70px;font-size:13.00px;line-height:15.60px;letter-spacing:0.185px;color:#252423;">2022-06-23</div>
<div class="t" style="left:1368.70px;top:672.70px;font-size:13.00px;line-height:15.60px;letter-spacing:0.255px;color:#252423;">Not Started</div>
<div class="t" style="left:1571.93px;top:672.70px;font-size:13.00px;line-height:15.60px;letter-spacing:-0.085px;color:#252423;">$0</div>
<div class="t" style="left:1698.30px;top:672.70px;font-size:13.00px;line-height:15.60px;letter-spacing:0.458px;color:#252423;">-21</div>
<div style="position:absolute;left:916px;top:689px;width:808px;height:1px;background:#e5e5e5;"></div>
<div style="position:absolute;left:1449.5px;top:690px;width:142.5px;height:19px;background:#fafafa;"></div>
<div class="t" style="left:921.20px;top:692.70px;font-size:13.00px;line-height:15.60px;letter-spacing:0.041px;color:#252423;">05_200 - Obtain Gathering System Permit</div>
<div class="t" style="left:1272.00px;top:692.70px;font-size:13.00px;line-height:15.60px;letter-spacing:0.185px;color:#252423;">2022-06-24</div>
<div class="t" style="left:1368.70px;top:692.70px;font-size:13.00px;line-height:15.60px;letter-spacing:0.255px;color:#252423;">Not Started</div>
<div class="t" style="left:1571.93px;top:692.70px;font-size:13.00px;line-height:15.60px;letter-spacing:-0.085px;color:#252423;">$0</div>
<div class="t" style="left:1698.30px;top:692.70px;font-size:13.00px;line-height:15.60px;letter-spacing:0.458px;color:#252423;">-21</div>
<div style="position:absolute;left:916px;top:709px;width:808px;height:1px;background:#e5e5e5;"></div>
<div style="position:absolute;left:1449.5px;top:710px;width:142.5px;height:19px;background:#fafafa;"></div>
<div class="t" style="left:921.20px;top:712.70px;font-size:13.00px;line-height:15.60px;letter-spacing:0.051px;color:#252423;">07_310 - Plant Construction</div>
<div class="t" style="left:1272.00px;top:712.70px;font-size:13.00px;line-height:15.60px;letter-spacing:0.185px;color:#252423;">2022-07-07</div>
<div class="t" style="left:1368.70px;top:712.70px;font-size:13.00px;line-height:15.60px;letter-spacing:0.255px;color:#252423;">Not Started</div>
<div class="t" style="left:1571.93px;top:712.70px;font-size:13.00px;line-height:15.60px;letter-spacing:-0.085px;color:#252423;">$0</div>
<div class="t" style="left:1698.30px;top:712.70px;font-size:13.00px;line-height:15.60px;letter-spacing:0.458px;color:#252423;">-30</div>
<div style="position:absolute;left:916px;top:729px;width:808px;height:1px;background:#e5e5e5;"></div>
<div style="position:absolute;left:1449.5px;top:730px;width:142.5px;height:19px;background:#fafafa;"></div>
<div class="t" style="left:921.20px;top:732.70px;font-size:13.00px;line-height:15.60px;letter-spacing:0.037px;color:#252423;">07_210 - Gathering System Construction</div>
<div class="t" style="left:1272.00px;top:732.70px;font-size:13.00px;line-height:15.60px;letter-spacing:0.185px;color:#252423;">2022-07-14</div>
<div class="t" style="left:1368.70px;top:732.70px;font-size:13.00px;line-height:15.60px;letter-spacing:0.255px;color:#252423;">Not Started</div>
<div class="t" style="left:1571.93px;top:732.70px;font-size:13.00px;line-height:15.60px;letter-spacing:-0.085px;color:#252423;">$0</div>
<div class="t" style="left:1698.30px;top:732.70px;font-size:13.00px;line-height:15.60px;letter-spacing:0.458px;color:#252423;">-21</div>
<div style="position:absolute;left:916px;top:749px;width:808px;height:1px;background:#e5e5e5;"></div>
<div style="position:absolute;left:1449.5px;top:750px;width:142.5px;height:19px;background:#fafafa;"></div>
<div class="t" style="left:921.20px;top:752.70px;font-size:13.00px;line-height:15.60px;letter-spacing:0.071px;color:#252423;">07_220 - Final Tie-in complete</div>
<div class="t" style="left:1272.00px;top:752.70px;font-size:13.00px;line-height:15.60px;letter-spacing:0.185px;color:#252423;">2022-09-12</div>
<div class="t" style="left:1368.70px;top:752.70px;font-size:13.00px;line-height:15.60px;letter-spacing:0.255px;color:#252423;">Not Started</div>
<div class="t" style="left:1571.93px;top:752.70px;font-size:13.00px;line-height:15.60px;letter-spacing:-0.085px;color:#252423;">$0</div>
<div class="t" style="left:1698.30px;top:752.70px;font-size:13.00px;line-height:15.60px;letter-spacing:0.458px;color:#252423;">-21</div>
<div style="position:absolute;left:916px;top:769px;width:808px;height:1px;background:#e5e5e5;"></div>
<div style="position:absolute;left:1449.5px;top:770px;width:142.5px;height:19px;background:#fafafa;"></div>
<div class="t" style="left:921.20px;top:772.70px;font-size:13.00px;line-height:15.60px;letter-spacing:0.055px;color:#252423;">07_900 - Ready for Production</div>
<div class="t" style="left:1272.00px;top:772.70px;font-size:13.00px;line-height:15.60px;letter-spacing:0.292px;color:#252423;">2022-11-04</div>
<div class="t" style="left:1368.70px;top:772.70px;font-size:13.00px;line-height:15.60px;letter-spacing:0.255px;color:#252423;">Not Started</div>
<div class="t" style="left:1571.93px;top:772.70px;font-size:13.00px;line-height:15.60px;letter-spacing:-0.085px;color:#252423;">$0</div>
<div class="t" style="left:1698.30px;top:772.70px;font-size:13.00px;line-height:15.60px;letter-spacing:0.458px;color:#252423;">-30</div>
<div style="position:absolute;left:916px;top:789px;width:808px;height:1px;background:#9a9a9a;"></div>
<div class="t" style="left:921.50px;top:792.90px;font-size:13.00px;line-height:15.60px;letter-spacing:-0.020px;color:#3a3a3a;font-weight:bold;">Total</div>
</body></html>
